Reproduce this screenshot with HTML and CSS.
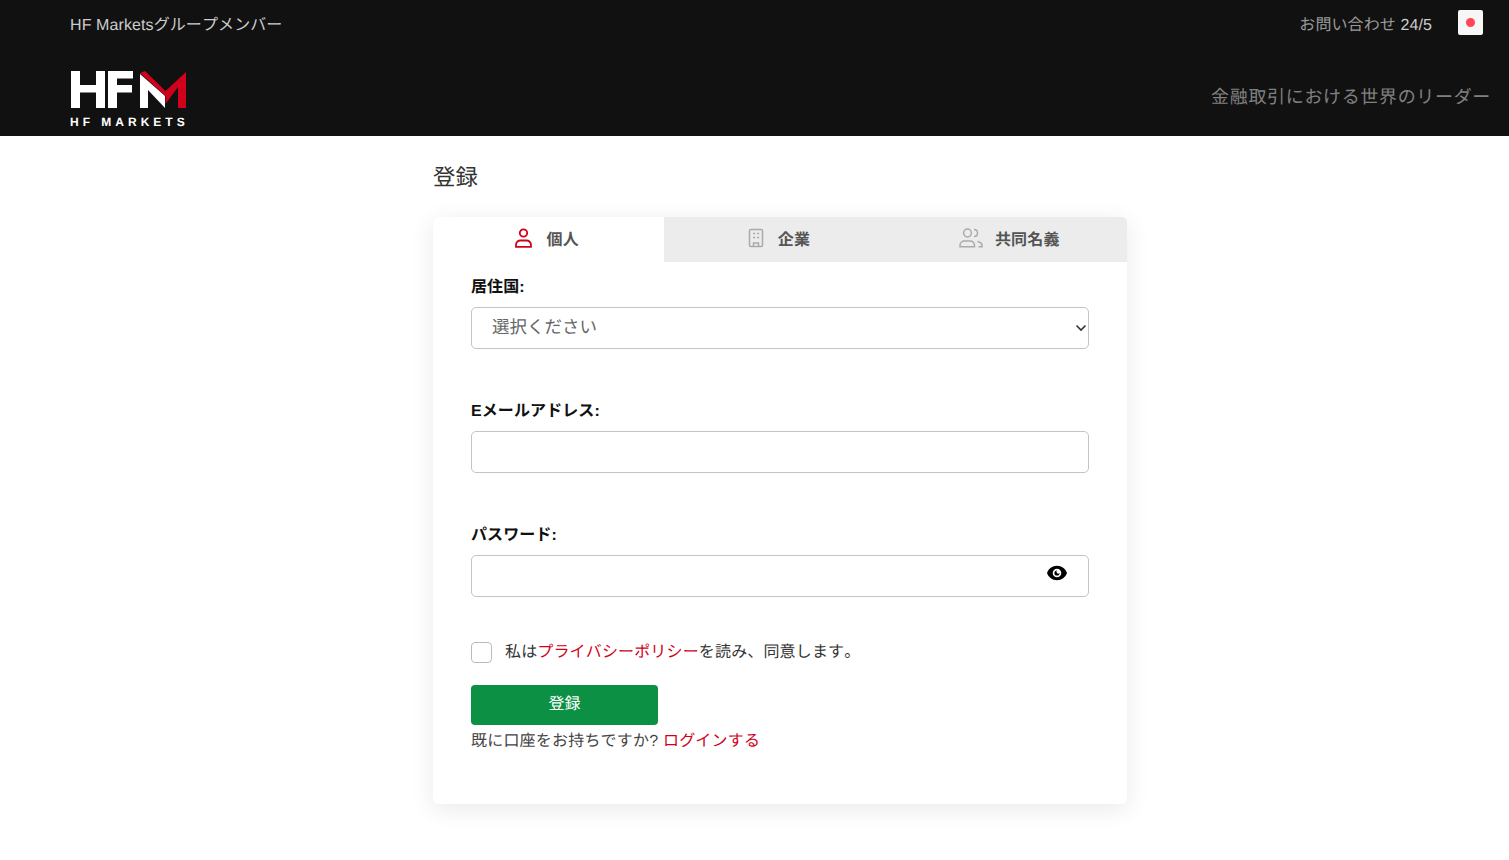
FILE: index.html
```html
<!DOCTYPE html>
<html lang="ja">
<head>
<meta charset="utf-8">
<title>登録</title>
<link rel="stylesheet" href="styles.css">
</head>
<body>
<header class="site-header">
  <div class="top-row">
    <span class="member">HF Marketsグループメンバー</span>
    <div class="top-right">
      <span class="support">お問い合わせ <b>24/5</b></span>
      <span class="flag"><i></i></span>
    </div>
  </div>
  <div class="brand-row">
    <svg class="logo" width="118" height="58" viewBox="0 0 118 58">
      <path fill="#fff" d="M1 1h9v14h16V1h9v37h-9V22.500H10V38H1z"/>
      <path fill="#fff" d="M38 1h25v7.500H47v6.500h15v7.500H47V38h-9z"/>
      <path fill="#d0021b" d="M75 1l20.500 20L116 2v36h-8V17L95.500 34v-8L70 3z"/>
      <path fill="#fff" d="M70 4l25 22v12L78 20v18h-8z"/>
      <text class="logo-text" x="0" y="56">HF MARKETS</text>
    </svg>
    <span class="slogan">金融取引における世界のリーダー</span>
  </div>
</header>
<main class="page">
  <h1 class="title">登録</h1>
  <section class="card">
    <nav class="tabs">
      <a class="tab active">
        <svg class="ico" width="20" height="20" viewBox="0 0 20 20" fill="none" stroke="#d0021b" stroke-width="1.800"><circle cx="9.500" cy="5" r="3.700"/><path d="M2 18.800h15v-1.800c0-2.700-2-4.500-4.500-4.500h-6C4 12.500 2 14.300 2 17z"/></svg>
        <span>個人</span>
      </a>
      <a class="tab">
        <svg class="ico" width="20" height="20" viewBox="0 0 20 20" fill="none" stroke="#aaa" stroke-width="1.500"><rect x="3.500" y="1.500" width="13" height="17" rx="1.500"/><path d="M7.500 18.500v-3.500h5v3.500M7 5.500h2.200M11 5.500h2.200M7 9.500h2.200M11 9.500h2.200"/></svg>
        <span>企業</span>
      </a>
      <a class="tab">
        <svg class="ico" width="24" height="20" viewBox="0 0 24 20" fill="none" stroke="#aaa" stroke-width="1.500"><circle cx="8.500" cy="5" r="3.900"/><path d="M1 18.800h14.500v-1.500c0-2.400-2-4.300-4.400-4.300H5.400C3 13 1 14.900 1 17.300z"/><path d="M15 1.500c2 0 3.500 1.500 3.500 3.500S17 8.500 15 8.500M18.500 13.500c2.500.5 4.500 2 4.500 4v1.300h-3.500"/></svg>
        <span>共同名義</span>
      </a>
    </nav>
    <form class="form">
      <div class="field">
        <label class="label">居住国:</label>
        <div class="control select-control">
          <span class="placeholder">選択ください</span>
          <svg class="chevron" width="12" height="8" viewBox="0 0 12 8" fill="none" stroke="#333" stroke-width="1.600"><path d="M1.500 1.500L6 6l4.500-4.500"/></svg>
        </div>
      </div>
      <div class="field">
        <label class="label">Eメールアドレス:</label>
        <div class="control"></div>
      </div>
      <div class="field last">
        <label class="label">パスワード:</label>
        <div class="control password">
          <svg class="eye" width="22" height="16" viewBox="0 0 22 16"><path fill-rule="evenodd" d="M11 .8C6.300.8 2.500 3.800 1 8c1.500 4.200 5.300 7.200 10 7.200S19.500 12.200 21 8C19.500 3.800 15.700.8 11 .8zM11 12.300a4.300 4.300 0 1 1 0-8.600 4.300 4.300 0 0 1 0 8.600z"/><path fill-rule="evenodd" d="M11 5.400a2.600 2.600 0 1 0 2.600 2.600 1.300 1.300 0 0 1-2.600-2.600z"/></svg>
        </div>
      </div>
      <div class="agree">
        <span class="checkbox"></span>
        <span class="agree-text">私は<a class="link">プライバシーポリシー</a>を読み、同意します。</span>
      </div>
      <div class="submit">登録</div>
      <p class="login">既に口座をお持ちですか? <a class="link">ログインする</a></p>
    </form>
  </section>
</main>
</body>
</html>
```

FILE: styles.css
```css
* { box-sizing: border-box; }
html, body { margin: 0; padding: 0; }
body {
  background: #fff;
  font-family: "Liberation Sans", "Noto Sans CJK JP", sans-serif;
  font-kerning: none;
  text-rendering: geometricPrecision;
  color: #333;
  height: 860px;
  overflow: hidden;
}
.site-header {
  background: #111;
  height: 136px;
  padding-left: 70px;
}
.top-row {
  display: flex;
  justify-content: space-between;
  align-items: center;
  height: 45px;
  padding-right: 26px;
}
.member { color: #ccc; font-size: 16px; letter-spacing: .1px; }
.top-right { display: flex; align-items: center; gap: 26px; }
.support { color: #999; font-size: 16px; letter-spacing: .1px; }
.support b { color: #ccc; font-weight: 400; }
.flag {
  width: 25px;
  height: 25px;
  background: #f7f7f7;
  border-radius: 2px;
  display: flex;
  align-items: center;
  justify-content: center;
}
.flag i {
  width: 9.600px;
  height: 9.600px;
  border-radius: 50%;
  background: #ff4655;
}
.brand-row {
  display: flex;
  justify-content: space-between;
  align-items: flex-start;
  padding-right: 18px;
  padding-top: 25px;
}
.logo { display: block; flex: none; }
.logo-text {
  fill: #fff;
  font-family: "Liberation Sans", sans-serif;
  font-weight: 700;
  font-size: 12px;
  letter-spacing: 4px;
}
.slogan {
  color: #808080;
  font-size: 18px;
  letter-spacing: .66px;
  margin-top: 13px;
}
.page { padding: 0 0 0 433px; }
.title {
  margin: 0;
  padding-top: 26px;
  font-size: 22.400px;
  line-height: 32px;
  font-weight: 400;
  color: #333;
}
.card {
  margin-top: 23px;
  width: 694px;
  height: 587px;
  background: #fff;
  border-radius: 5px;
  box-shadow: 0 5px 25px rgba(0, 0, 0, .09);
  overflow: hidden;
}
.tabs { display: flex; height: 45px; background: #ececec; }
.tab {
  flex: 1;
  display: flex;
  align-items: center;
  justify-content: center;
  gap: 12px;
  font-size: 16px;
  font-weight: 700;
  color: #555;
  letter-spacing: .2px;
  padding: 0 4px 4px 0;
}
.tab.active { background: #fff; }
.ico { display: block; }
.form { padding: 13px 38px 0; }
.field { height: 124px; }
.field.last { height: 103px; }
.label {
  display: block;
  height: 32px;
  padding-top: 2px;
  line-height: 22px;
  font-size: 16px;
  font-weight: 700;
  color: #111;
  letter-spacing: .1px;
}
.control {
  height: 42px;
  width: 618px;
  border: 1px solid #c4c4c4;
  border-radius: 5px;
  background: #fff;
  display: flex;
  align-items: center;
}
.select-control { justify-content: space-between; padding: 0 1px 0 20px; }
.placeholder { font-size: 17.500px; color: #666; position: relative; top: -2px; }
.chevron { display: block; }
.password { justify-content: flex-end; padding: 0 20px 6px 0; }
.agree {
  display: flex;
  align-items: center;
  gap: 13px;
  margin-top: 12px;
  height: 24px;
}
.checkbox {
  width: 21px;
  height: 21px;
  border: 1px solid #bbb;
  border-radius: 4px;
  flex: none;
  position: relative;
  top: 2px;
}
.agree-text { font-size: 16px; color: #333; letter-spacing: .15px; }
.link { color: #d0021b; }
.submit {
  margin-top: 23px;
  width: 187px;
  height: 40px;
  background: #0b9044;
  color: #fff;
  border-radius: 4px;
  font-size: 16px;
  display: flex;
  align-items: center;
  justify-content: center;
  padding-bottom: 6px;
}
.login { margin: 7px 0 0; font-size: 16px; line-height: 20px; color: #444; letter-spacing: .2px; }
```
